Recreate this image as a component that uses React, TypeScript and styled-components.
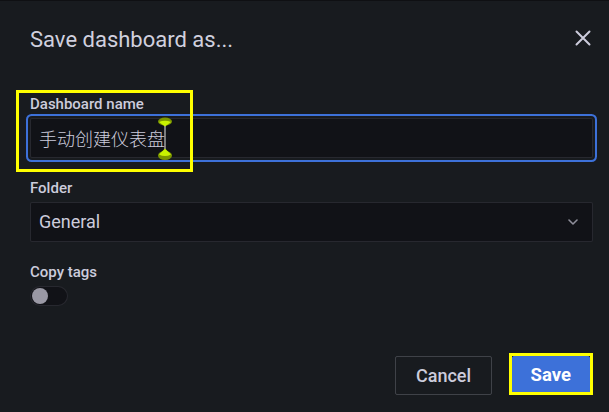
import React from "react";
import styled, { createGlobalStyle } from "styled-components";

const Global = createGlobalStyle`
  html, body { margin: 0; padding: 0; background: #181b1f; }
  * { box-sizing: border-box; }
`;

const Modal = styled.div`
  width: 609px;
  height: 412px;
  background: #181b1f;
  border-top: 1px solid #0f1013;
  font-family: Roboto, "Noto Sans CJK SC", sans-serif;
  color: #ccccdc;
  display: flex;
  flex-direction: column;
  overflow: hidden;
`;

const Header = styled.div`
  display: flex;
  justify-content: space-between;
  align-items: flex-start;
  padding: 26px 18px 0 30px;
  height: 92.5px;
`;

const Title = styled.h1`
  margin: 0;
  font-size: 22px;
  line-height: 26px;
  font-weight: 400;
  color: #d0d0de;
`;

const CloseButton = styled.button`
  background: none;
  border: none;
  padding: 0;
  margin-top: 3px;
  width: 16px;
  height: 16px;
  display: flex;
  color: #ccccdc;
  cursor: pointer;
`;

const Body = styled.div`
  display: flex;
  flex-direction: column;
  gap: 20px;
  padding: 0 16px 0 30px;
`;

const Field = styled.div`
  position: relative;
  display: flex;
  flex-direction: column;
  gap: 4px;
`;

const Label = styled.label`
  font-size: 15px;
  line-height: 20px;
  font-weight: 500;
  color: #ccccdc;
`;

const InputBox = styled.div<{ $focused?: boolean }>`
  position: relative;
  height: 40px;
  background: #111217;
  border: 1px solid rgba(204, 204, 220, 0.12);
  border-radius: 2px;
  display: flex;
  align-items: center;
  padding: 0 8px;
  font-size: 18px;
  color: #ccccdc;
  box-shadow: ${(p) =>
    p.$focused ? "0 0 0 2px #181b1f, 0 0 0 4px #3d71d9" : "none"};
`;

const CjkText = styled.span`
  font-family: "Noto Sans CJK SC", sans-serif;
  font-weight: 300;
  font-size: 18px;
  line-height: 24px;
`;

const SelectBox = styled(InputBox)`
  justify-content: space-between;
  padding-right: 14px;
`;

const Annotation = styled.span`
  position: absolute;
  left: -14px;
  top: -4px;
  width: 177px;
  height: 82px;
  border: 3px solid #ffff00;
  pointer-events: none;
`;

const Handles = styled.svg`
  position: absolute;
  left: 126px;
  top: -2px;
`;

const Switch = styled.div`
  width: 38px;
  height: 20px;
  border-radius: 10px;
  background: #111217;
  border: 1px solid rgba(204, 204, 220, 0.12);
  display: flex;
  align-items: center;
  padding: 0 1px;
`;

const Knob = styled.span`
  width: 16px;
  height: 16px;
  border-radius: 50%;
  background: #9a99a5;
`;

const Footer = styled.div`
  margin-top: 50px;
  display: flex;
  justify-content: flex-end;
  gap: 20px;
  padding-right: 19px;
`;

const Button = styled.button<{ $primary?: boolean }>`
  position: relative;
  height: 39px;
  padding: 0 ${(p) => (p.$primary ? "18px" : "19.5px")};
  font-family: Roboto, sans-serif;
  font-size: 18px;
  font-weight: ${(p) => (p.$primary ? 700 : 500)};
  border-radius: 2px;
  cursor: pointer;
  color: ${(p) => (p.$primary ? "#ffffff" : "#ccccdc")};
  background: ${(p) => (p.$primary ? "#3d71d9" : "transparent")};
  border: 1px solid
    ${(p) => (p.$primary ? "#3d71d9" : "rgba(204, 204, 220, 0.22)")};
`;

const SaveLabel = styled.span`
  font-size: 18.5px;
`;

const Highlight = styled.span`
  position: absolute;
  left: -4px;
  right: -4px;
  top: -4px;
  bottom: -1px;
  border: 3px solid #ffff00;
  pointer-events: none;
`;

export default function App() {
  return (
    <>
      <Global />
      <Modal>
        <Header>
          <Title>Save dashboard as...</Title>
          <CloseButton aria-label="Close">
            <svg width="16" height="16" viewBox="0 0 16 16">
              <path
                d="M1.5 1.5 L14.5 14.5 M14.5 1.5 L1.5 14.5"
                stroke="currentColor"
                strokeWidth="2"
                strokeLinecap="round"
              />
            </svg>
          </CloseButton>
        </Header>
        <Body>
          <Field>
            <Label>Dashboard name</Label>
            <InputBox $focused>
              <CjkText>手动创建仪表盘</CjkText>
              <Handles width="16" height="45" viewBox="0 0 16 45">
                <ellipse cx="8" cy="4.5" rx="7" ry="4" fill="#7c9600" />
                <path d="M2 5 Q8 2.5 14 5 L8 9.5 Z" fill="#c9f200" />
                <line x1="8" y1="9" x2="8" y2="32" stroke="#e6e6e6" strokeWidth="1" />
                <ellipse cx="8" cy="38.5" rx="7" ry="4.5" fill="#7c9600" />
                <path d="M8 31.5 L14 37.5 Q8 40.5 2 37.5 Z" fill="#c9f200" />
              </Handles>
            </InputBox>
            <Annotation />
          </Field>
          <Field>
            <Label>Folder</Label>
            <SelectBox>
              <span>General</span>
              <svg width="10" height="6" viewBox="0 0 10 6">
                <path
                  d="M1 1 L5 5 L9 1"
                  fill="none"
                  stroke="#8e8e9a"
                  strokeWidth="1.6"
                  strokeLinecap="round"
                  strokeLinejoin="round"
                />
              </svg>
            </SelectBox>
          </Field>
          <Field>
            <Label>Copy tags</Label>
            <Switch>
              <Knob />
            </Switch>
          </Field>
        </Body>
        <Footer>
          <Button>Cancel</Button>
          <Button $primary>
            <SaveLabel>Save</SaveLabel>
            <Highlight />
          </Button>
        </Footer>
      </Modal>
    </>
  );
}
